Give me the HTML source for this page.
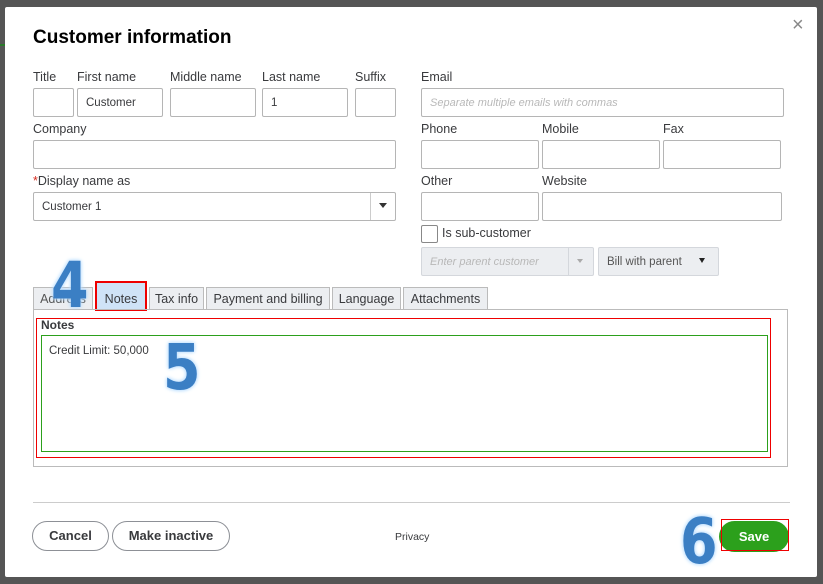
<!DOCTYPE html>
<html><head><style>
*{box-sizing:border-box;margin:0;padding:0}
body{width:823px;height:584px;background:#555;position:relative;overflow:hidden;font-family:"Liberation Sans",sans-serif;color:#393a3d}
.dlg{position:absolute;left:5px;top:7px;width:812px;height:570px;background:#fff;border-radius:2px}
.a{position:absolute}
.lbl{position:absolute;font-size:12.5px;color:#393a3d}
.in{position:absolute;height:29px;border:1px solid #b5b5b5;border-radius:2px;background:#fff;font-size:11.5px;padding:7px 8px 0;line-height:14px}
.ph{color:#b8b8b8;font-style:italic}
.tab{position:absolute;top:287px;height:23px;border:1px solid #bbb;border-bottom:none;background:#eceef1;font-size:12.5px;line-height:22px;text-align:center}
.btn{position:absolute;top:521px;height:30px;border:1px solid #8d9096;border-radius:16px;font-size:13px;font-weight:bold;text-align:center;line-height:28px;color:#393a3d}
.big{position:absolute;font-weight:bold;font-size:60px;line-height:60px;color:#3b7fc4;text-shadow:0 0 3px #cfe8ff,0 0 4px #9fd0ff;font-family:"DejaVu Sans Condensed","DejaVu Sans",sans-serif;transform:scaleY(1.05)}
</style></head><body>
<div class="a" style="left:0;top:44px;width:5px;height:2px;background:#2a7a2a"></div>
<div class="dlg"></div>
<div class="a" style="left:33px;top:27px;font-size:19px;font-weight:bold;color:#000">Customer information</div>
<div class="a" style="left:792px;top:14px;font-size:20px;color:#888">×</div>

<div class="lbl" style="left:33px;top:70px">Title</div>
<div class="lbl" style="left:77px;top:70px">First name</div>
<div class="lbl" style="left:170px;top:70px">Middle name</div>
<div class="lbl" style="left:262px;top:70px">Last name</div>
<div class="lbl" style="left:355px;top:70px">Suffix</div>
<div class="lbl" style="left:421px;top:70px">Email</div>
<div class="in" style="left:33px;top:88px;width:41px"></div>
<div class="in" style="left:77px;top:88px;width:86px">Customer</div>
<div class="in" style="left:170px;top:88px;width:86px"></div>
<div class="in" style="left:262px;top:88px;width:86px">1</div>
<div class="in" style="left:355px;top:88px;width:41px"></div>
<div class="in ph" style="left:421px;top:88px;width:363px;font-size:11px">Separate multiple emails with commas</div>

<div class="lbl" style="left:33px;top:122px">Company</div>
<div class="lbl" style="left:421px;top:122px">Phone</div>
<div class="lbl" style="left:542px;top:122px">Mobile</div>
<div class="lbl" style="left:663px;top:122px">Fax</div>
<div class="in" style="left:33px;top:140px;width:363px"></div>
<div class="in" style="left:421px;top:140px;width:118px"></div>
<div class="in" style="left:542px;top:140px;width:118px"></div>
<div class="in" style="left:663px;top:140px;width:118px"></div>

<div class="lbl" style="left:33px;top:174px"><span style="color:#d52b1e">*</span>Display name as</div>
<div class="lbl" style="left:421px;top:174px">Other</div>
<div class="lbl" style="left:542px;top:174px">Website</div>
<div class="in" style="left:33px;top:192px;width:363px">Customer 1</div>
<div class="a" style="left:370px;top:193px;width:1px;height:27px;background:#ccc"></div>
<div class="a" style="left:379px;top:203px;border:4px solid transparent;border-top:5px solid #333"></div>
<div class="in" style="left:421px;top:192px;width:118px"></div>
<div class="in" style="left:542px;top:192px;width:240px"></div>

<div class="a" style="left:421px;top:225px;width:17px;height:18px;border:1px solid #888;border-radius:2px"></div>
<div class="lbl" style="left:442px;top:226px">Is sub-customer</div>
<div class="in ph" style="left:421px;top:247px;width:173px;background:#eceef1;border-color:#d4d7dc;font-size:11px">Enter parent customer</div>
<div class="a" style="left:568px;top:248px;width:1px;height:27px;background:#d4d7dc"></div>
<div class="a" style="left:577px;top:259px;border:3px solid transparent;border-top:4px solid #aaa"></div>
<div class="in" style="left:598px;top:247px;width:121px;background:#eceef1;border-color:#d4d7dc;color:#555">Bill with parent</div>
<div class="a" style="left:699px;top:258px;border:3px solid transparent;border-top:5px solid #222"></div>

<div class="tab" style="left:33px;width:60px;color:#555">Address</div>
<div class="tab" style="left:95px;top:281px;height:30px;width:52px;background:#cfe3f7;border:2px solid #e00;line-height:32px">Notes</div>
<div class="tab" style="left:149px;width:55px">Tax info</div>
<div class="tab" style="left:206px;width:124px">Payment and billing</div>
<div class="tab" style="left:332px;width:69px">Language</div>
<div class="tab" style="left:403px;width:85px">Attachments</div>
<div class="a" style="left:33px;top:309px;width:755px;height:158px;border:1px solid #bbb"></div>
<div class="a" style="left:36px;top:318px;width:735px;height:140px;border:1px solid #e00"></div>
<div class="a" style="left:41px;top:318px;font-size:12px;font-weight:bold">Notes</div>
<div class="a" style="left:41px;top:335px;width:727px;height:117px;border:1px solid #2ca01c"></div>
<div class="a" style="left:49px;top:345px;font-size:11.5px">Credit Limit: 50,000</div>

<div class="big" style="left:51px;top:256px">4</div>
<div class="big" style="left:163px;top:338px">5</div>
<div class="big" style="left:680px;top:512px">6</div>

<div class="a" style="left:33px;top:502px;width:757px;height:1px;background:#ccc"></div>
<div class="btn" style="left:32px;width:77px">Cancel</div>
<div class="btn" style="left:112px;width:118px">Make inactive</div>
<div class="a" style="left:395px;top:531px;font-size:10.5px">Privacy</div>
<div class="a" style="left:719px;top:521px;width:70px;height:31px;background:#2ca01c;border-radius:16px;color:#fff;font-weight:bold;font-size:13px;text-align:center;line-height:31px">Save</div>
<div class="a" style="left:721px;top:519px;width:68px;height:32px;border:1px solid #e00"></div>
</body></html>
